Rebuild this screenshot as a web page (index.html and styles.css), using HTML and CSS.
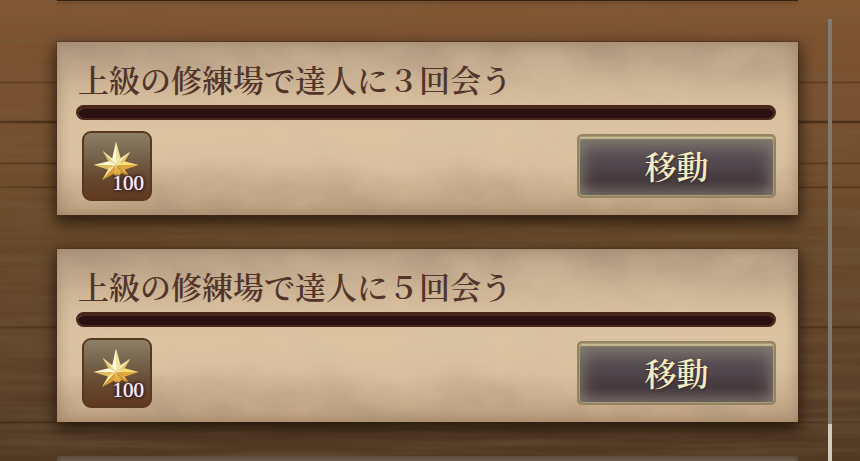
FILE: index.html
```
<!DOCTYPE html>
<html lang="ja">
<head>
    <meta charset="UTF-8" />
    <meta name="viewport" content="width=device-width, initial-scale=1.0"/>
    <title>ミッション</title>
    <link rel="stylesheet" href="styles.css">
</head>
<body>
    <!-- Shared textures and the star emblem -->
    <svg class="defs" aria-hidden="true">
        <defs>
            <filter id="grain" x="0" y="0" width="100%" height="100%">
                <feTurbulence type="fractalNoise" baseFrequency="0.005 0.11" numOctaves="4" seed="8"/>
                <feColorMatrix values="0 0 0 0 0.18  0 0 0 0 0.11  0 0 0 0 0.05  0.9 0 0 0 -0.34"/>
            </filter>
            <filter id="stains" x="0" y="0" width="100%" height="100%">
                <feTurbulence type="fractalNoise" baseFrequency="0.014 0.018" numOctaves="4" seed="5"/>
                <feColorMatrix values="0 0 0 0 0.38  0 0 0 0 0.26  0 0 0 0 0.18  1.3 0 0 0 -0.46"/>
            </filter>
            <linearGradient id="edge-fade" x1="0" y1="0" x2="0" y2="1">
                <stop offset="0" stop-color="#fff"/>
                <stop offset="0.35" stop-color="#111"/>
                <stop offset="0.65" stop-color="#111"/>
                <stop offset="1" stop-color="#fff"/>
            </linearGradient>
            <mask id="edges" maskContentUnits="objectBoundingBox">
                <rect width="1" height="1" fill="url(#edge-fade)"/>
            </mask>
        </defs>
        <symbol id="star" viewBox="0 0 70 70">
            <path d="M34 34L30 27L34 9Z" fill="#fffdd8"/>
            <path d="M34 34L34 9L39 27Z" fill="#f0dc8c"/>
            <path d="M34 34L30 27L20 19L26 30Z" fill="#fbf3b8"/>
            <path d="M34 34L20 19L26 30Z" fill="#dcc06c"/>
            <path d="M34 34L39 27L49 20L43 30Z" fill="#fff5b8"/>
            <path d="M34 34L49 20L43 30Z" fill="#e2ba58"/>
            <path d="M34 34L26 30L10 34Z" fill="#fffbd0"/>
            <path d="M34 34L10 34L26 39Z" fill="#e0bd62"/>
            <path d="M34 34L43 30L58 34Z" fill="#f8de78"/>
            <path d="M34 34L58 34L43 39Z" fill="#e0a83c"/>
            <path d="M34 34L26 38L19 50Z" fill="#ffe99a"/>
            <path d="M34 34L19 50L32 43Z" fill="#d79c36"/>
            <path d="M34 34L31 42L35 48L40 42Z" fill="#e4b04a"/>
            <path d="M34 34L43 39L49 47Z" fill="#f0c24e"/>
            <path d="M34 34L49 47L39 42Z" fill="#d2952e"/>
            <path d="M34 9L37 27L49 20L40 31L34 37L26 32L30 27Z" fill="#fffbe0" opacity="0.35"/>
        </symbol>
    </svg>

    <main class="screen">
        <svg class="wood" aria-hidden="true"><rect width="100%" height="100%" filter="url(#grain)"/></svg>

        <div class="missions">
            <div class="card card-past"></div>

            <section class="card">
                <svg class="paper" aria-hidden="true"><g mask="url(#edges)"><rect width="100%" height="100%" filter="url(#stains)"/></g></svg>
                <h2 class="title" id="mission-1">上級の修練場で達人に３回会う</h2>
                <progress class="bar" value="0" max="3" aria-labelledby="mission-1"></progress>
                <div class="row">
                    <div class="reward">
                        <svg class="star" aria-hidden="true"><use href="#star"/></svg>
                        <span class="count">100</span>
                    </div>
                    <button class="move" type="button">移動</button>
                </div>
            </section>

            <section class="card">
                <svg class="paper" aria-hidden="true"><g mask="url(#edges)"><rect width="100%" height="100%" filter="url(#stains)"/></g></svg>
                <h2 class="title" id="mission-2">上級の修練場で達人に５回会う</h2>
                <progress class="bar" value="0" max="5" aria-labelledby="mission-2"></progress>
                <div class="row">
                    <div class="reward">
                        <svg class="star" aria-hidden="true"><use href="#star"/></svg>
                        <span class="count">100</span>
                    </div>
                    <button class="move" type="button">移動</button>
                </div>
            </section>

            <div class="card card-done"></div>
        </div>

        <div class="scroll"><div class="thumb"></div></div>
    </main>
</body>
</html>
```
FILE: styles.css
```
* {
    box-sizing: border-box;
}

body {
    margin: 0;
    font-family: "Liberation Serif", "Noto Serif CJK JP", "Noto Sans CJK JP", serif;
    background-color: #5a3b20;
}

.defs {
    position: absolute;
    width: 0;
    height: 0;
}

.screen {
    position: relative;
    display: grid;
    grid-template-columns: 1fr 4px;
    grid-template-rows: minmax(0, 1fr);
    column-gap: 30px;
    height: 100vh;
    padding: 0 28px 0 57px;
    overflow: hidden;
    /* plank joints over the lit boards */
    background:
        linear-gradient(transparent 81px, #583a20 82px, transparent 84px,
            transparent 120px, #402813 122px, transparent 124px,
            transparent 162px, #543619 163px, transparent 165px,
            transparent 186px, #543619 187px, transparent 189px,
            transparent 326px, #4a2e17 327px, transparent 329px,
            transparent 421px, #38230f 422px, transparent 424px),
        linear-gradient(#845833, #7c5230 40px, #75502f 130px, #684829 230px, #62442b 330px, #563c25 420px, #503822);
}

/* Wood grain and paper stains lie under the content */
.wood,
.paper {
    position: absolute;
    top: 0;
    left: 0;
    width: 100%;
    height: 100%;
}

.missions {
    position: relative;
    display: flex;
    flex-direction: column;
    gap: 34px;
}

.card {
    position: relative;
    flex: none;
    padding: 20px 22px 14px 19px;
    background: linear-gradient(#bca78c, #d2ba9a 25%, #dcc4a3 50%, #dac1a0 72%, #c0a382);
    box-shadow:
        0 0 1px 1px rgba(70, 45, 25, 0.4),
        0 6px 14px 2px rgba(20, 10, 3, 0.7),
        inset 0 0 14px rgba(120, 88, 62, 0.5);
}

.card-past {
    height: 1px;
    margin-bottom: 7px;
    padding: 0;
    background: #33200f;
    box-shadow: 0 1px 4px rgba(20, 10, 3, 0.7);
}

.card-done {
    height: 174px;
    background: #706050;
    box-shadow: inset 0 0 6px #4a3828;
}

.title {
    position: relative;
    margin: 0 0 3px;
    padding-left: 2px;
    font-size: 31px;
    font-weight: 600;
    line-height: 40px;
    color: #52352a;
    white-space: nowrap;
}

.bar {
    position: relative;
    display: block;
    width: 100%;
    height: 15px;
    border: 2px solid #482719;
    border-top-width: 4px;
    border-radius: 8px;
    background: #2a1010;
    appearance: none;
    overflow: hidden;
}

.bar::-webkit-progress-bar {
    background: #2a1010;
}

.row {
    position: relative;
    display: flex;
    justify-content: space-between;
    align-items: center;
    margin-top: 11px;
    padding-left: 6px;
}

.reward {
    position: relative;
    width: 70px;
    height: 70px;
    border: 2px solid #57391f;
    border-radius: 9px;
    background: linear-gradient(#8d8066, #75634b 35%, #674a31 65%, #60391f);
}

.star {
    display: block;
    width: 100%;
    height: 100%;
}

.count {
    position: absolute;
    right: 6px;
    bottom: 4px;
    font-size: 21px;
    line-height: 24px;
    color: #f2eaf4;
    text-shadow: 0 0 1px #f2eaf4, 0 0 2px #32171c, 1px 1px 2px #32171c, -1px -1px 2px #32171c, 0 0 4px #32171c;
}

.move {
    width: 199px;
    height: 64px;
    padding: 3px 0 0;
    border: 2px solid #948561;
    border-radius: 5px;
    background: linear-gradient(#7a716a, #574e54 35%, #43383c 75%, #4a4048);
    box-shadow:
        inset 0 0 0 1px #a79b76,
        inset 0 3px 1px #c8bb92,
        inset 0 0 16px 3px #857c6e;
    font-family: inherit;
    font-size: 32px;
    font-weight: 600;
    line-height: 40px;
    color: #f6ecc0;
    text-shadow: 0 1px 3px #32272a;
    cursor: pointer;
}

.move:hover {
    color: #fff;
}

.scroll {
    position: relative;
    display: flex;
    flex-direction: column;
    justify-content: flex-end;
    margin-top: 19px;
    background: #82796f;
}

.thumb {
    height: 37px;
    background: #d4cbbb;
}
```
